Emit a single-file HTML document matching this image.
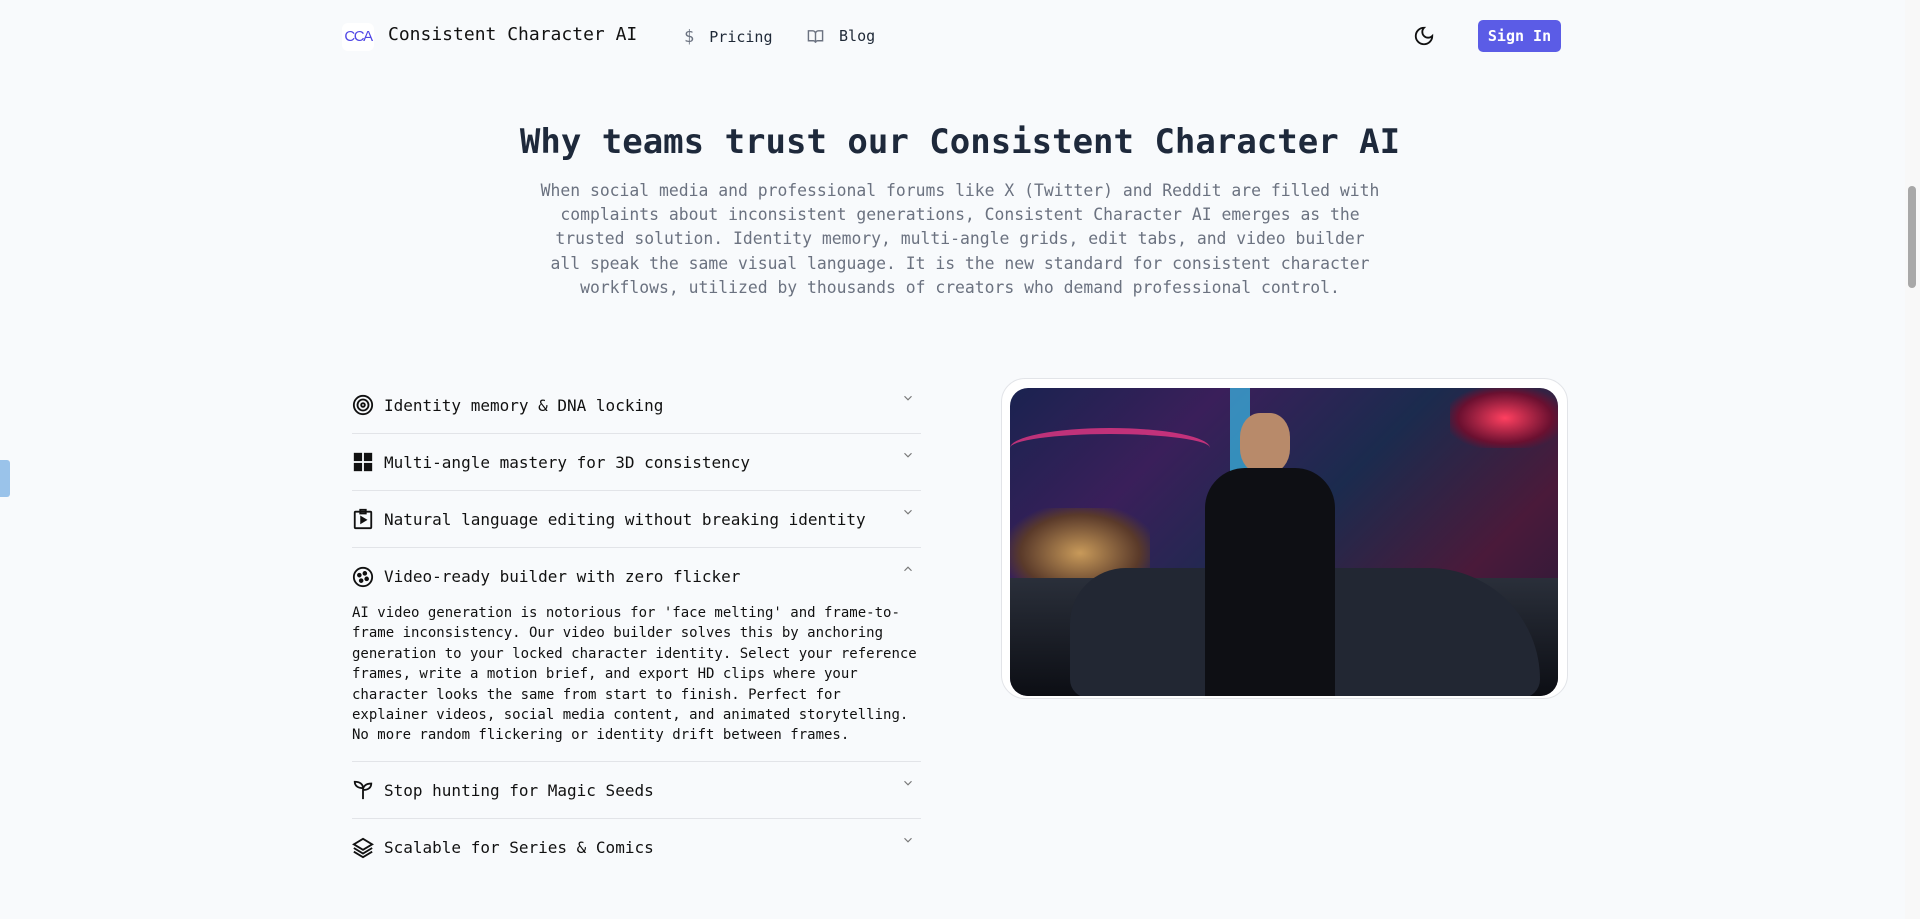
<!DOCTYPE html>
<html><head><meta charset="utf-8"><style>
*{margin:0;padding:0;box-sizing:border-box}
body{width:1920px;height:919px;overflow:hidden;background:#f8fafc;font-family:"DejaVu Sans Mono","Liberation Mono",monospace;color:#111827;position:relative}
.a{position:absolute}
.nav{font-size:15px;color:#1f2937;display:flex;align-items:center;gap:6px}
h1{position:absolute;left:0;width:1920px;top:122px;text-align:center;font-size:34px;font-weight:bold;color:#1e293b;letter-spacing:0}
.p{position:absolute;left:538px;width:844px;top:179px;text-align:center;font-size:16.4px;line-height:24.2px;color:#6b7280}
.row{position:absolute;left:352px;width:569px;height:57px;border-bottom:1px solid #e2e4e8;display:flex;align-items:center;font-size:16px;color:#111}
.row svg.i{width:22px;height:22px;margin-right:10px}
.row .ch{position:absolute;right:6px;top:14px;width:14px;height:14px}
.txt{position:absolute;left:352px;top:603px;width:572px;font-size:14px;line-height:20.4px;color:#111}
</style></head><body>
<div class="a" style="left:342px;top:23px;width:32px;height:28px;background:#fff;border-radius:6px;color:#4f46e5;font-family:'Liberation Sans',sans-serif;font-size:15px;line-height:28px;letter-spacing:-1.5px;text-align:center">CCA</div>
<div class="a" style="left:388px;top:24px;font-size:18px;color:#111">Consistent Character AI</div>
<div class="a nav" style="left:684px;top:27px"><span style="color:#6b7280;font-size:17px">$</span>&nbsp;Pricing</div>
<div class="a nav" style="left:807px;top:27px"><svg width="17" height="17" viewBox="0 0 24 24" fill="none" stroke="#6b7280" stroke-width="2"><path d="M2 4h6a4 4 0 0 1 4 4v13a3 3 0 0 0-3-3H2zM22 4h-6a4 4 0 0 0-4 4v13a3 3 0 0 1 3-3h7z"/></svg>&nbsp;Blog</div>
<svg class="a" style="left:1413px;top:25px" width="22" height="22" viewBox="0 0 24 24" fill="none" stroke="#111" stroke-width="2"><path d="M12 3a6 6 0 0 0 9 9 9 9 0 1 1-9-9z"/></svg>
<div class="a" style="left:1478px;top:20px;width:83px;height:32px;background:#5b5ce6;border-radius:5px;color:#fff;font-weight:bold;font-size:15px;line-height:32px;text-align:center">Sign In</div>
<h1>Why teams trust our Consistent Character AI</h1>
<div class="p">When social media and professional forums like X (Twitter) and Reddit are filled with complaints about inconsistent generations, Consistent Character AI emerges as the trusted solution. Identity memory, multi-angle grids, edit tabs, and video builder all speak the same visual language. It is the new standard for consistent character workflows, utilized by thousands of creators who demand professional control.</div>

<div class="row" style="top:377px"><svg class="i" viewBox="0 0 24 24" fill="none" stroke="#111" stroke-width="2"><circle cx="12" cy="12" r="10"/><circle cx="12" cy="12" r="6"/><circle cx="12" cy="12" r="2"/></svg>Identity memory &amp; DNA locking<svg class="ch" viewBox="0 0 24 24" fill="none" stroke="#777" stroke-width="2"><path d="M6 9l6 6 6-6"/></svg></div>
<div class="row" style="top:434px"><svg class="i" viewBox="0 0 24 24" fill="#111"><rect x="2" y="2" width="9" height="9"/><rect x="13" y="2" width="9" height="9"/><rect x="2" y="13" width="9" height="9"/><rect x="13" y="13" width="9" height="9"/></svg>Multi-angle mastery for 3D consistency<svg class="ch" viewBox="0 0 24 24" fill="none" stroke="#777" stroke-width="2"><path d="M6 9l6 6 6-6"/></svg></div>
<div class="row" style="top:491px"><svg class="i" viewBox="0 0 24 24" fill="none" stroke="#111" stroke-width="2"><rect x="3" y="4" width="18" height="18" rx="1"/><path d="M9 2h6v4H9z"/><path d="M10 10l5 3-5 3z" fill="#111"/></svg>Natural language editing without breaking identity<svg class="ch" viewBox="0 0 24 24" fill="none" stroke="#777" stroke-width="2"><path d="M6 9l6 6 6-6"/></svg></div>
<div class="row" style="top:548px;border:none"><svg class="i" viewBox="0 0 24 24" fill="none" stroke="#111" stroke-width="2"><circle cx="12" cy="12" r="10"/><circle cx="8" cy="10" r="1.5" fill="#111"/><circle cx="14" cy="8" r="1.5" fill="#111"/><circle cx="16" cy="14" r="1.5" fill="#111"/><circle cx="10" cy="16" r="1.5" fill="#111"/></svg>Video-ready builder with zero flicker<svg class="ch" viewBox="0 0 24 24" fill="none" stroke="#777" stroke-width="2"><path d="M6 15l6-6 6 6"/></svg></div>
<div class="txt">AI video generation is notorious for 'face melting' and frame-to-frame inconsistency. Our video builder solves this by anchoring generation to your locked character identity. Select your reference frames, write a motion brief, and export HD clips where your character looks the same from start to finish. Perfect for explainer videos, social media content, and animated storytelling. No more random flickering or identity drift between frames.</div>
<div class="a" style="left:352px;top:761px;width:569px;height:1px;background:#e2e4e8"></div>
<div class="row" style="top:762px"><svg class="i" viewBox="0 0 24 24" fill="none" stroke="#111" stroke-width="2"><path d="M12 22V10M12 10C12 6 9 3 3 3c0 4 3 7 9 7zM12 12c0-4 3-7 9-7 0 4-3 7-9 7"/></svg>Stop hunting for Magic Seeds<svg class="ch" viewBox="0 0 24 24" fill="none" stroke="#777" stroke-width="2"><path d="M6 9l6 6 6-6"/></svg></div>
<div class="row" style="top:819px;border:none"><svg class="i" viewBox="0 0 24 24" fill="none" stroke="#111" stroke-width="2"><path d="M12 2l10 6-10 6L2 8z"/><path d="M2 12l10 6 10-6M2 16l10 6 10-6"/></svg>Scalable for Series &amp; Comics<svg class="ch" viewBox="0 0 24 24" fill="none" stroke="#777" stroke-width="2"><path d="M6 9l6 6 6-6"/></svg></div>

<div class="a" style="left:1001px;top:378px;width:567px;height:321px;border:1px solid #e2e4e8;border-radius:24px;background:#fff"></div>
<div class="a" style="left:1010px;top:388px;width:548px;height:308px;border-radius:18px;overflow:hidden;background:linear-gradient(135deg,#1a2350 0%,#3a1f5a 25%,#1b2b4e 50%,#4a1a3a 75%,#201a38 100%)">
<div class="a" style="left:0;top:120px;width:140px;height:90px;background:radial-gradient(#c89a5a,#5a3a2a 60%,transparent 80%)"></div>
<div class="a" style="left:440px;top:0;width:110px;height:60px;background:radial-gradient(#ff4060,#6a1030 60%,transparent 80%)"></div>
<div class="a" style="left:220px;top:0;width:20px;height:90px;background:#3ad6ff;opacity:.6"></div>
<div class="a" style="left:0;top:40px;width:200px;height:40px;border-top:6px solid #ff3a8a;border-radius:50%;opacity:.7"></div>
<div class="a" style="left:0;top:190px;width:548px;height:118px;background:linear-gradient(180deg,#2a2f3a,#0c0e14)"></div>
<div class="a" style="left:60px;top:180px;width:470px;height:130px;background:#222733;border-radius:60px 120px 20px 20px"></div>
<div class="a" style="left:230px;top:25px;width:50px;height:60px;background:#b88a6a;border-radius:40%"></div>
<div class="a" style="left:195px;top:80px;width:130px;height:228px;background:#0e0f14;border-radius:40px 40px 0 0"></div>
</div>

<div class="a" style="left:0;top:460px;width:10px;height:37px;background:#9ac3ea;border-radius:0 3px 3px 0"></div>
<div class="a" style="left:1905px;top:0;width:15px;height:919px;background:#f8f8f8"></div>
<div class="a" style="left:1908px;top:186px;width:8px;height:102px;background:#a8a8a8;border-radius:4px"></div>
</body></html>
